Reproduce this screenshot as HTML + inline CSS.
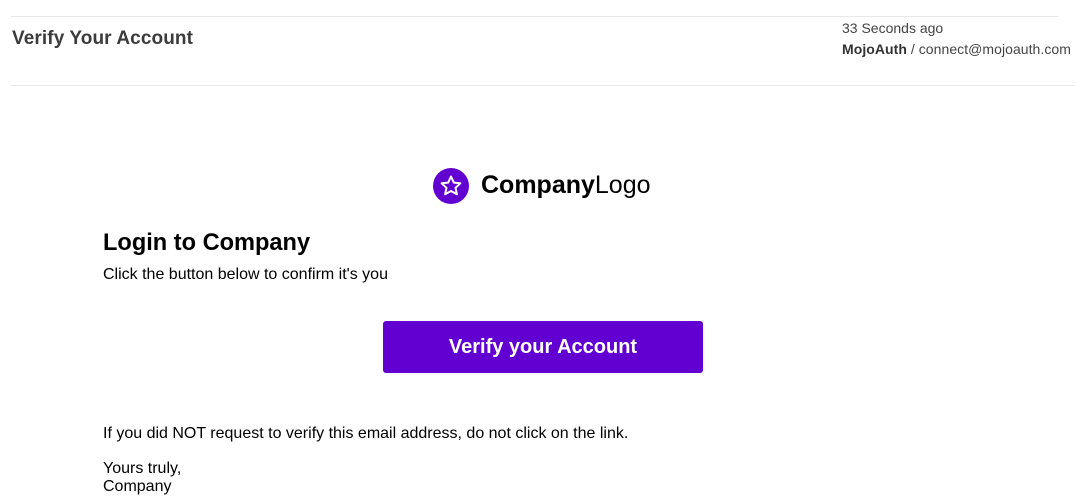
<!DOCTYPE html>
<html><head><style>
body{margin:0;width:1085px;height:497px;overflow:hidden;background:#fff;font-family:"Liberation Sans",Arial,sans-serif;position:relative}
.a{position:absolute;white-space:nowrap}
</style></head><body>
<div class="a" style="left:11px;top:16px;width:1047px;height:1px;background:#e8e8e8"></div>
<div class="a" style="left:11px;top:85px;width:1064px;height:1px;background:#e8e8e8"></div>
<div class="a" style="left:12px;top:28px;font-size:19px;font-weight:bold;color:#3c3c3c;letter-spacing:0.1px">Verify Your Account</div>
<div class="a" style="left:842px;top:20px;font-size:14px;color:#444">33 Seconds ago</div>
<div class="a" style="left:842px;top:41px;font-size:14px;color:#444;letter-spacing:0.05px"><b style="color:#333">MojoAuth</b> / connect@mojoauth.com</div>
<svg class="a" style="left:433px;top:168px" width="36" height="36" viewBox="0 0 36 36"><circle cx="18" cy="18" r="18" fill="#6200d2"/><path d="M18 8.5l2.8 6.1 6.6.7-4.9 4.5 1.4 6.5L18 23l-5.9 3.3 1.4-6.5-4.9-4.5 6.6-.7z" fill="none" stroke="#fff" stroke-width="2" stroke-linejoin="round"/></svg>
<div class="a" style="left:481px;top:171px;font-size:25px;color:#000"><b>Company</b>Logo</div>
<div class="a" style="left:103px;top:230px;font-size:23.6px;font-weight:bold;color:#000">Login to Company</div>
<div class="a" style="left:103px;top:266px;font-size:16px;color:#000">Click the button below to confirm it's you</div>
<div class="a" style="left:383px;top:321px;width:320px;height:52px;background:#6200d2;border-radius:3px;color:#fff;font-size:20px;font-weight:bold;text-align:center;line-height:52px">Verify your Account</div>
<div class="a" style="left:103px;top:425px;font-size:16px;color:#000">If you did NOT request to verify this email address, do not click on the link.</div>
<div class="a" style="left:103px;top:460px;font-size:16px;color:#000;line-height:18px">Yours truly,<br>Company</div>
</body></html>
